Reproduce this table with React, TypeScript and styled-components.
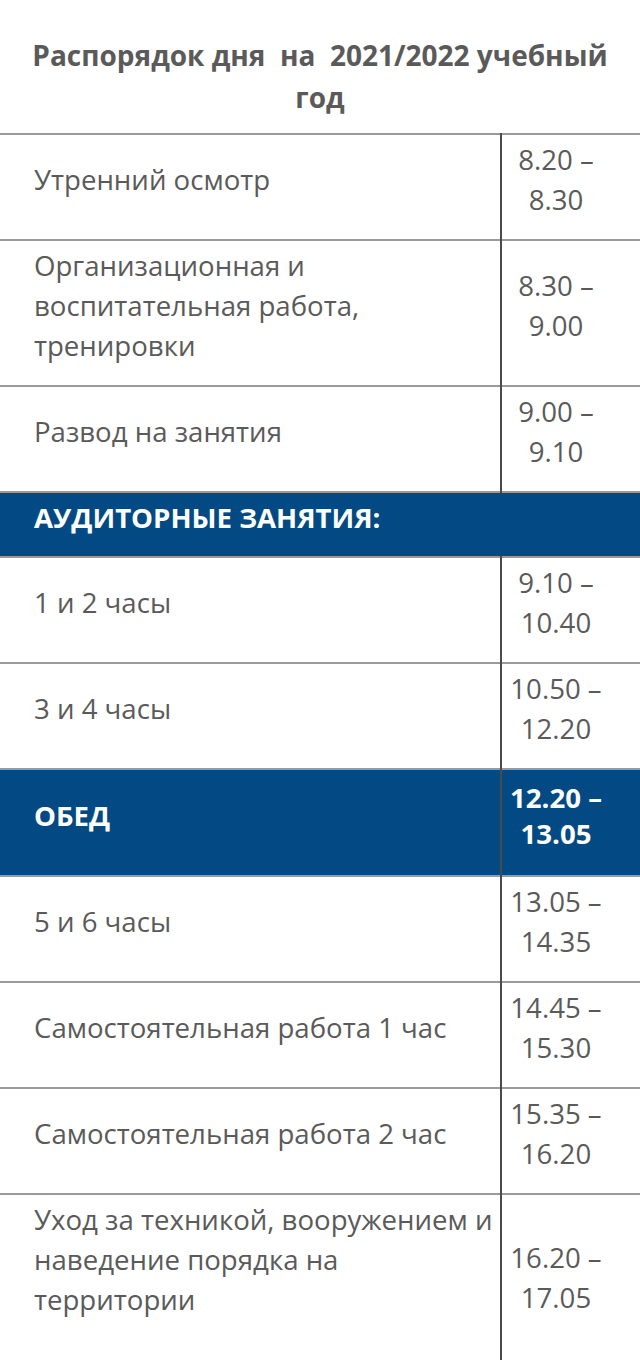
import React from 'react'
import styled, { createGlobalStyle } from 'styled-components'

const GlobalStyle = createGlobalStyle`
  html, body {
    margin: 0;
    padding: 0;
    background: #fff;
  }
  body {
    font-family: 'Open Sans', 'Noto Sans', sans-serif;
    color: #5a5a5a;
    overflow-x: hidden;
  }
`

const Page = styled.div`
  width: 640px;
`

const Title = styled.h2`
  margin: 0;
  padding: 34px 28px 15px;
  text-align: center;
  font-size: 28px;
  line-height: 42px;
  font-weight: 700;
  color: #5a5a5a;
`

const Table = styled.table`
  width: 640px;
  border-collapse: collapse;
  table-layout: fixed;
`

const Row = styled.tr<{ $accent?: boolean }>`
  background: ${({ $accent }) => ($accent ? '#034a84' : 'transparent')};
  color: ${({ $accent }) => ($accent ? '#fff' : 'inherit')};
  font-weight: ${({ $accent }) => ($accent ? 700 : 400)};
  border-top: 2px solid #9a9a9a;
  border-bottom: 2px solid #9a9a9a;
`

const LunchRow = styled(Row)`
  height: 107px;

  td {
    line-height: 36px;
  }
`

const Cell = styled.td`
  vertical-align: middle;
  font-size: 27.6px;
  line-height: 40px;
`

const NameCell = styled(Cell)<{ $tall?: boolean }>`
  padding: 4px 0 ${({ $tall }) => ($tall ? '40px' : '4px')} 34px;
  border-right: 2px solid #4a4a4a;
`

const SectionCell = styled(Cell)`
  padding: 4px 8px 3px 34px;
`

const TimeCell = styled(Cell)`
  padding: 4px 38px 4px 8px;
  text-align: center;
`

const Text = styled.p`
  margin: 0 0 16px;
`

type Item =
  | { kind: 'row'; name: string; from: string; to: string; lunch?: boolean; tall?: boolean }
  | { kind: 'section'; name: string }

const schedule: Item[] = [
  { kind: 'row', name: 'Утренний осмотр', from: '8.20', to: '8.30' },
  { kind: 'row', name: 'Организационная и воспитательная работа, тренировки', from: '8.30', to: '9.00' },
  { kind: 'row', name: 'Развод на занятия', from: '9.00', to: '9.10' },
  { kind: 'section', name: 'АУДИТОРНЫЕ ЗАНЯТИЯ:' },
  { kind: 'row', name: '1 и 2 часы', from: '9.10', to: '10.40' },
  { kind: 'row', name: '3 и 4 часы', from: '10.50', to: '12.20' },
  { kind: 'row', name: 'ОБЕД', from: '12.20', to: '13.05', lunch: true },
  { kind: 'row', name: '5 и 6 часы', from: '13.05', to: '14.35' },
  { kind: 'row', name: 'Самостоятельная работа 1 час', from: '14.45', to: '15.30' },
  { kind: 'row', name: 'Самостоятельная работа 2 час', from: '15.35', to: '16.20' },
  {
    kind: 'row',
    name: 'Уход за техникой, вооружением и наведение порядка на территории',
    from: '16.20',
    to: '17.05',
    tall: true,
  },
]

export default function App() {
  return (
    <Page>
      <GlobalStyle />
      <Title>Распорядок дня&nbsp; на&nbsp; 2021/2022 учебный год</Title>
      <Table>
        <colgroup>
          <col style={{ width: 501 }} />
          <col />
        </colgroup>
        <tbody>
          {schedule.map((item) => {
            if (item.kind === 'section') {
              return (
                <Row key={item.name} $accent>
                  <SectionCell colSpan={2}>
                    <Text>{item.name}</Text>
                  </SectionCell>
                </Row>
              )
            }
            const RowKind = item.lunch ? LunchRow : Row
            return (
              <RowKind key={item.name} $accent={item.lunch}>
                <NameCell $tall={item.tall}>
                  <Text>{item.name}</Text>
                </NameCell>
                <TimeCell>
                  <Text>
                    {item.from}&nbsp;– {item.to}
                  </Text>
                </TimeCell>
              </RowKind>
            )
          })}
        </tbody>
      </Table>
    </Page>
  )
}
